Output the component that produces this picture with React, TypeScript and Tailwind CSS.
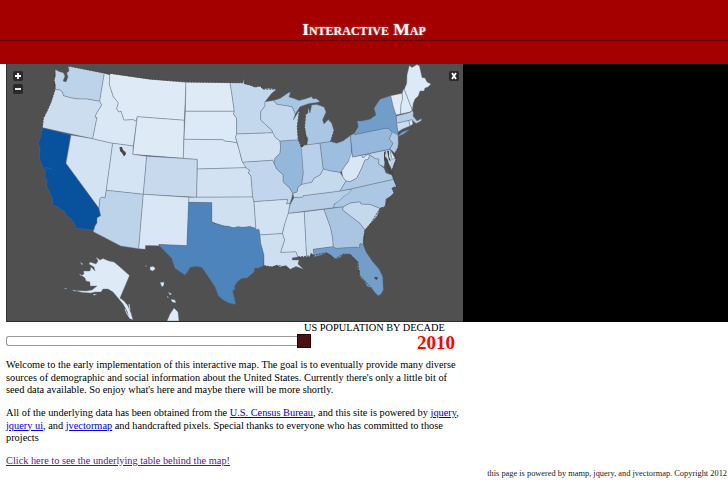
type Shape = { id: string; fill: string; d: string };

const states: Shape[] = [
  { id: "WA", fill: "#bdd3ea", d: "M55 69.3L59 71.5 63.3 72.7 65 76 63 81 66 82 68 77 66.7 73 69 71 68.3 66 104.3 73.3 99.7 101.3 86.7 99 79 99 71.7 98 63.3 95.7 62.5 92 60 90 55 89.3 55.5 85 54 80 55.5 76Z" },
  { id: "OR", fill: "#cdddf0", d: "M55 89.3L60 90 62.5 92 63.3 95.7 71.7 98 79 99 86.7 99 99.7 101.3 101.7 105 96.5 113.5 95 117 97 117.5 92.7 138.7 42.3 127.7 43.3 118.3 47 111 51 102Z" },
  { id: "CA", fill: "#08519c", d: "M42.3 127.7L71 135 66 163.3 99 208.3 100.7 215.7 97 218 97 223 95 226 95 230.3 76 228.3 74 222.7 71 219 66.7 215.7 64 211 61 210 58 207 52.7 205 52.3 198.3 46.5 186 47 180 44.5 177 45.5 172 43.3 168.3 39.3 158.3 40 148.3 38 143 40.5 137Z" },
  { id: "NV", fill: "#d3e3f3", d: "M71 135L92.7 138.7 112.7 143.3 106.3 190.3 105 198 102 197 100 198.5 99 208.3 66 163.3Z" },
  { id: "ID", fill: "#dae8f6", d: "M104.3 73.3L110 75 109.3 84 113.3 96.7 118.3 102.7 116.7 109 119 112 121 111 124 120 133 119.5 136 121 137.3 116.7 133.3 146 112.7 143.3 92.7 138.7 97 117.5 95 117 96.5 113.5 101.7 105 99.7 101.3Z" },
  { id: "MT", fill: "#deebf7", d: "M110 73.4L150 79.2 186 82 184.3 120.3 137.3 116.7 136 121 133 119.5 124 120 121 111 119 112 116.7 109 118.3 102.7 113.3 96.7 109.3 84Z" },
  { id: "WY", fill: "#deebf7", d: "M137.3 116.7L184.3 120.3 183.3 158.3 132.7 154.3Z" },
  { id: "UT", fill: "#d5e4f4", d: "M112.7 143.3L133.3 146 132.7 154.3 146.7 156.3 143.3 194.3 106.3 190.3Z" },
  { id: "CO", fill: "#c6d9ed", d: "M146.7 156.3L197.3 159.3 196.7 197.3 143.3 194.3Z" },
  { id: "AZ", fill: "#bdd3ea", d: "M106.3 190.3L143.3 194.3 138.7 248.7 120.7 246 93.3 231.7 95 226 97 223 97 218 100.7 215.7 99 208.3 100 198.5 102 197 105 198Z" },
  { id: "NM", fill: "#d8e6f5", d: "M143.3 194.3L189 197.3 187 245.7 159 244.5 159 245.8 145.5 245.5 145.3 249.3 138.7 248.7Z" },
  { id: "ND", fill: "#deebf7", d: "M186 82L230 82.7 232 95 234.3 111.3 185.3 111.3Z" },
  { id: "SD", fill: "#dce9f6", d: "M185.3 111.3L234.3 111.3 233.5 114 236.5 118 236.7 134 235.5 137 237 143 230 141.5 225 141.3 223 139.7 184 139.3Z" },
  { id: "NE", fill: "#d8e6f5", d: "M184 139.3L223 139.7 225 141.3 230 141.5 237 143 239 149 241.7 160 246 167.7 197.3 169 197.3 159.3 183.3 158.3Z" },
  { id: "KS", fill: "#d2e2f3", d: "M197.3 169L246 167.7 249.5 170 248.5 173 251 176 252.7 197 196.7 197.3Z" },
  { id: "OK", fill: "#cfe0f1", d: "M189 197.3L252.7 197 254 201.7 256 229.5 250 226.7 242 227.5 233.3 227.7 220 225 211.7 221.7 211.7 202.7 188.5 202.3Z" },
  { id: "TX", fill: "#4e84bc", d: "M188.5 202.3L211.7 202.7 211.7 221.7 215 224 220 224.5 223 226.5 228 226 233.3 228 238 226.5 243 227.5 250 226.5 259 229.3 260 235 260.7 243.3 264 255 263.3 265.7 258 268 254.5 268 254 272 251 274.5 247 278 241.7 278.3 237 282 234.3 286.7 235 289 232.5 291 234 296.7 235.7 304.3 229 303 223.3 300 218.3 295.7 215 286.7 205 271.7 202 267.5 196.7 266.3 190 267.3 188 271 185 275 175 268.3 171.7 258.3 159 245.3 159 244.5 187 245.7Z" },
  { id: "MN", fill: "#c3d8ed", d: "M230 82.7L243 82.7 243.3 79.5 244.5 84 250 85 255 87 260 86 263 89 268.3 88.3 276.7 89.3 271.7 93.3 265 101.7 265 106 260.7 111.7 260.7 120 266 125 271.7 130 273.3 132.7 236.7 134 236.5 118 233.5 114 234.3 111.3 232 95Z" },
  { id: "IA", fill: "#d1e1f2", d: "M236.7 134L273.3 132.7 275 137 280 141 280.7 147 280 153.3 275 158.3 274 163 272.7 160.3 242.5 162.3 239 149 235.5 137Z" },
  { id: "MO", fill: "#c1d6ec", d: "M242.5 162.3L272.7 160.3 274 163 276.7 169 283.3 175 283 181.7 290 188.3 292.7 193.3 291.7 198.3 290 203.3 286.5 204 287.7 199.3 254 201.7 252.7 197 251 176 248.5 173 249.5 170 246 167.7Z" },
  { id: "AR", fill: "#d2e2f3", d: "M254 201.7L287.7 199.3 286.5 204 290 203.3 288.5 213 285 223.3 282.3 233.5 260 235 259 229.3 256 229.5Z" },
  { id: "LA", fill: "#cddff0", d: "M260 235L282.5 233.5 284.7 240 280.7 252.3 296 251.7 298 257 292 258 292.5 260 299 260 298 264 303.3 269 296 266.5 290 269.3 286 265.5 280 267 277 265 271.7 267 264 265.7 264 255 260.7 243Z" },
  { id: "MS", fill: "#d4e3f3", d: "M288.3 213.3L304.3 211.7 305 225 306.7 257 298 257 296 251.7 280.7 252.3 284.7 240 282.5 233.5 285 223.3Z" },
  { id: "AL", fill: "#c8dbef", d: "M304.3 211.7L324 209.3 330.7 228 332.7 238.3 333.3 246.7 313.3 249.3 314.3 255.5 311 253 310 256.5 306.7 257 305 225Z" },
  { id: "FL", fill: "#739ec9", d: "M313.3 249.3L333.3 246.7 336 248.3 356.7 247 359 248 360 243.3 363.3 245 366 252 372.7 261.7 379 269 382.7 276.7 383.3 290 381 294 378.3 295.7 374.5 292 371.7 288.3 367 286 365 281.7 361 278 359.3 275 360 271 357.7 269 357.7 261.7 350 254.3 343.3 254.3 340 257.5 335 259.3 331 255 326.7 252.7 321 255 314.3 256.7Z" },
  { id: "GA", fill: "#a9c5e1", d: "M324 209.3L343.3 206.7 342.7 210 350 215.7 360 223.3 365 230 363.3 238.3 363.3 245 360 243.3 359 248 356.7 247 336 248.3 333.3 246.7 332.7 238.3 330.7 228Z" },
  { id: "SC", fill: "#c5d9ed", d: "M343.3 206.7L350 203 360 201.7 361 204 370 204.3 380 208.3 377 216 371 223 365 230 360 223.3 350 215.7 342.7 210Z" },
  { id: "NC", fill: "#abc7e3", d: "M351.7 188.7L393.3 179.3 396.5 186.7 392 188 394 193 391 196 386 199 385 206.7 380 208.3 370 204.3 361 204 360 201.7 350 203 343.3 206.7 333.3 207.7 334.3 204 343.3 196.7Z" },
  { id: "TN", fill: "#b7cfe7", d: "M294 197.5L303 197 303 195.7 340 191 351.7 189 349 193 343.3 196.7 339 201 334.3 204 333.3 207.7 288.3 213.3 290 205Z" },
  { id: "KY", fill: "#c6daee", d: "M292.7 193.3L297 192 298 187 301.7 184.3 307 183 311.7 182.3 314 178 320 175 323.3 169 331.7 171 340 172.3 342.7 176.7 346 181 340 191 303 195.7 303 197 294 197.5Z" },
  { id: "IL", fill: "#94b8dc", d: "M280 141L298.3 139.7 301.7 146.7 303.3 173.3 301.7 184.3 298 187 297 192 292.7 193.3 290 188.3 283 181.7 283.3 175 276.7 169 274 163 275 158.3 280 153.3 280.7 147Z" },
  { id: "IN", fill: "#b8d0e9", d: "M301.3 146.7L305 145 320 143 323.3 169 320 175 314 178 311.7 182.3 301.7 184.3 303.3 173.3Z" },
  { id: "OH", fill: "#9dbedf", d: "M320 143L330.7 141.5 336.7 143.3 343 141 350.5 135.5 351.7 155 348.3 161.7 345 166 341.7 171 340 172.3 331.7 171 323.3 169Z" },
  { id: "MI", fill: "#a9c6e3", d: "M306.7 145L308 139 306 135 304.5 126.7 305.5 115 308 113 308 108 310 113 311.7 105 317 104.5 324 107 326 112 322.5 120 324 124 328.3 119.5 331.7 123.3 334 131 330.7 141.5 320 143Z" },
  { id: "UP", fill: "#a9c6e3", d: "M273.5 100.5L280 98.5 288 93 290.5 92 289 97 294 98.5 299 100.5 305 99 311.7 96.7 313 99 316 98.5 320 101.5 317 102.5 309 103.5 300 106.7 295.3 114 292 106.7 276.7 104.3Z" },
  { id: "WI", fill: "#c3d8ed", d: "M265 101.7L273.5 100.5 276.7 104.3 292 106.7 295.3 114 293.3 120 299.5 110 297.3 126.7 298.3 139.7 280 141 275 137 271.7 130 266 125 260.7 120 260.7 111.7 265 106Z" },
  { id: "WV", fill: "#d9e7f5", d: "M351.7 152L352.5 157 361.5 155.3 363 158 367 154.5 370 155 368 159.5 365 160 361.7 168.3 356.7 178.3 350 181.7 346 181 342.7 176.7 341.7 171 345 166 348.3 161.7Z" },
  { id: "VA", fill: "#b0cae5", d: "M346 181L350 181.7 356.7 178.3 361.7 168.3 365 160 368 159.5 370 155 375 158.5 379 159 378.5 164 384 168 386 173 391.7 175 393.3 179.3 351.7 188.7 340 191Z" },
  { id: "MD", fill: "#bed4eb", d: "M361.5 155.3L390 149.3 392 158 396 159 394 164 392 170 389 164 385 161 384 167 378.5 164 379 159 375 158.5 370 155 367 154.5 363 158Z" },
  { id: "DE", fill: "#e0ecf7", d: "M390 149L391.5 152 395 158 392 159.5Z" },
  { id: "PA", fill: "#95b8dc", d: "M350.5 135.5L354 133.5 355 134.5 385 128.3 388.3 128.3 392.3 132.3 389.3 139 393 143.3 390 149 352.5 157Z" },
  { id: "NY", fill: "#719dca", d: "M354 134L358.3 126.7 357.3 121 362 121 370 119.3 376 115 374 108.3 380 99.3 390.7 95.7 393.3 106.7 396 115 396.7 123.3 398 134 396 136 392.3 132.3 388.3 128.3 385 128.3 355 134.5Z" },
  { id: "LI", fill: "#719dca", d: "M396.7 137L402 132 409.3 129.5 404 134Z" },
  { id: "NJ", fill: "#b0cae6", d: "M392.3 132.3L398 135 398.3 143.3 397.7 148.3 395 153.3 390 149 393 143.3 389.3 139Z" },
  { id: "VT", fill: "#e0ebf7", d: "M390.7 95.7L402.3 93.3 402.5 99 401 105 400.5 114 396 115 393.3 106.7Z" },
  { id: "NH", fill: "#dce9f6", d: "M402.3 93.3L403 90 404.3 89.3 412.3 110 410 112 400.5 114 401 105 402.5 99Z" },
  { id: "ME", fill: "#dce9f6", d: "M404.3 89.3L406.7 83.3 407 75 409.3 65.5 412 67.5 417 64.5 419.5 66 422 77.5 425 78 427 82 431 84 428 87 425 88 424 91 420 91 418.3 96 415 99 413.3 103.3 412.3 110Z" },
  { id: "MA", fill: "#b6cfe8", d: "M396.3 116L410 112.5 412.3 110.5 413.5 113 413 116 417 121 421.7 118.5 421 121 416 123.5 412 119.7 396.7 123.3Z" },
  { id: "CT", fill: "#ccddef", d: "M396.7 123.3L409 120.5 410 126 402 129.3 398 132Z" },
  { id: "RI", fill: "#dce9f6", d: "M409 120.5L412 119.7 413 124 410 126Z" },
  { id: "AK", fill: "#deebf7", d: "M96 257L100 260 103 258.5 109 261 114 262 120 267 129.5 275.5 120 298 124 301 128 306 131 313 133 320 129 318 127 311 123 304 118 298 113 292 108 289 103 289 101 292 95 292 91 293 82 292.5 75 290.5 86 291 92 290 97 286 90 286 90 282 86 281 85 278 81.5 275.5 84 274 83.5 271 90 271 91 267 95 271 94 267 89 264 90 262 96 264 98 261Z" },
  { id: "HI", fill: "#deebf7", d: "M150 267L153 266.3 155.5 268.5 153 271 150 270ZM160 282.5L164 282 164 285 162 287ZM168 292L172 294 170 295ZM171 299L175 300 176 303 172 302ZM167 321L170 314 174 308 178 312 179 321Z" },
  { id: "isles", fill: "#deebf7", d: "M64 288l3 .5-1 .8zM72 290l4 .5-1 1zM80 262l3 2-1 1zM79 274l3 1-1 1zM93 294l4 0-3 1.5zM145 266l2-.5-1 1zM167 296l2 1.5-2 0z" },
];

const lakes = [
  "M119.5 147L122 147 123 150 125.5 152 126 154 124 156.5 122 153 120 151Z",
  "M374 278L376 276.5 378 278 376.5 280Z",
  "M384 152L386 151 385 156 388 160 389 166 391 171 393 174 390 174 387 168 384 160Z",
  "M387 150.5L389 151 389 157 391 161 389 160Z",
  "M299.8 145H303.5L303 147 301 147Z",
];

function UsMap() {
  return (
    <svg className="block h-[258px] w-[457px]" viewBox="6 64 457 258" role="img" aria-label="US population map">
      <g stroke="#5f6f7e" strokeOpacity="0.65" strokeWidth="0.6" strokeLinejoin="round">
        {states.map((s) => (
          <path key={s.id} d={s.d} fill={s.fill} />
        ))}
      </g>
      <g fill="#484642">
        {lakes.map((d) => (
          <path key={d} d={d} />
        ))}
      </g>
      <g fill="none" stroke="#3d3a36" strokeWidth="0.8" strokeDasharray="2 1">
        <path d="M68.5 66L104.3 72.8 110 73.2 150 79 186 82 230 82.5 243 82.7 250 85 255 87 260 86 263 89 276.7 89.3" />
        <path d="M55 69.3L54 80 55 89.3 51 102 47 111 43.3 118.3 42.3 127.7" />
        <path d="M306.7 145L304.5 126.7 305.5 115 M299.5 110L297.3 126.7 298.3 139.7 301 146 M334 131L330.7 141.5 M397.7 148.3L395 153.3 396 160 392 171 394 179 396.5 186.7 392 188 394 193 391 196 385 206.7 380 208.3 371 223 365 230 363.3 245" />
        <path d="M264 265.7L271.7 267 280 265.7 290 269.3 M298 257L310 256 326 252.7 335 259 343 254.3 350 254.3 357.7 261.7 359.3 275 371.7 288.3" />
      </g>
      <path d="M45 167.5l4 .8 3 1M45 168l2 2.5" fill="none" stroke="#426994" strokeWidth="0.6" />
      <path d="M126 304l1 5 2 3M129 304l1 6 M125 309l2 5 4 5" fill="none" stroke="#e6eef6" strokeWidth="0.8" />
      <path d="M6.5 64V321.5H463" fill="none" stroke="#303030" />
    </svg>
  );
}

function MapButton({ place, d }: { place: string; d: string }) {
  return (
    <button className={`absolute flex size-[10px] items-center justify-center rounded-[2px] bg-[#292929] ${place}`}>
      <svg viewBox="0 0 10 10" className="size-[10px]">
        <path d={d} fill="none" stroke="white" strokeWidth="1.8" />
      </svg>
    </button>
  );
}

const link = "text-[#0000ee] underline";

export default function App() {
  return (
    <div className="h-[485px] w-[728px] overflow-hidden bg-white font-['Liberation_Serif',serif] text-black">
      <header className="h-16 bg-[#a50000]">
        <h1 className="flex h-[41px] items-end justify-center border-b border-[#650000] text-[17.5px] leading-[22px] font-bold text-white [font-variant:small-caps] [text-shadow:0_0_2px_#ffffff80]">
          <span>Interactive Map</span>
        </h1>
      </header>
      <div className="ml-[6px] flex h-[258px] bg-black">
        <div className="relative w-[457px] shrink-0 bg-[#505050]">
          <UsMap />
          <MapButton place="top-[7px] left-[7px]" d="M2 5H8M5 2V8" />
          <MapButton place="top-[20px] left-[7px]" d="M2 5H8" />
          <MapButton place="top-[7px] right-[4px]" d="M3 2L7 8M7 2L3 8" />
        </div>
      </div>
      <section className="ml-[6px] flex h-[32px] w-[457px]">
        <div className="w-[298px] pt-[12px]">
          <div className="flex h-[14px] w-[305px] items-center">
            <div className="h-[10px] grow rounded-l-[3px] border border-r-0 border-[#999] bg-white" />
            <div className="size-[14px] shrink-0 border border-[#300] bg-[#4b1010]" />
          </div>
        </div>
        <div className="w-[151px] whitespace-nowrap">
          <div className="text-[10.35px] leading-[11px]">US POPULATION BY DECADE</div>
          <div className="text-right text-[19px] leading-[19px] font-bold text-[#ff0000]">2010</div>
        </div>
      </section>
      <main className="ml-[6px] h-[113px] pt-[5px] text-[10.33px] leading-[12.5px] whitespace-nowrap">
        <p>
          Welcome to the early implementation of this interactive map. The goal is to eventually provide many diverse
          <br />
          sources of demographic and social information about the United States. Currently there's only a little bit of
          <br />
          seed data available. So enjoy what's here and maybe there will be more shortly.
        </p>
        <p className="mt-[10.5px]">
          All of the underlying data has been obtained from the <a className={link}>U.S. Census Bureau</a>, and this site is powered by <a className={link}>jquery</a>,
          <br />
          <a className={link}>jquery ui</a>, and <a className={link}>jvectormap</a> and handcrafted pixels. Special thanks to everyone who has committed to those
          <br />
          projects
        </p>
        <p className="mt-[10.5px]">
          <a className="text-[#551a8b] underline">Click here to see the underlying table behind the map!</a>
        </p>
      </main>
      <footer className="pr-[1px] pt-px text-right text-[8.37px] leading-[11px] text-[#222]">
        this page is powered by mamp, jquery, and jvectormap. Copyright 2012
      </footer>
    </div>
  );
}
